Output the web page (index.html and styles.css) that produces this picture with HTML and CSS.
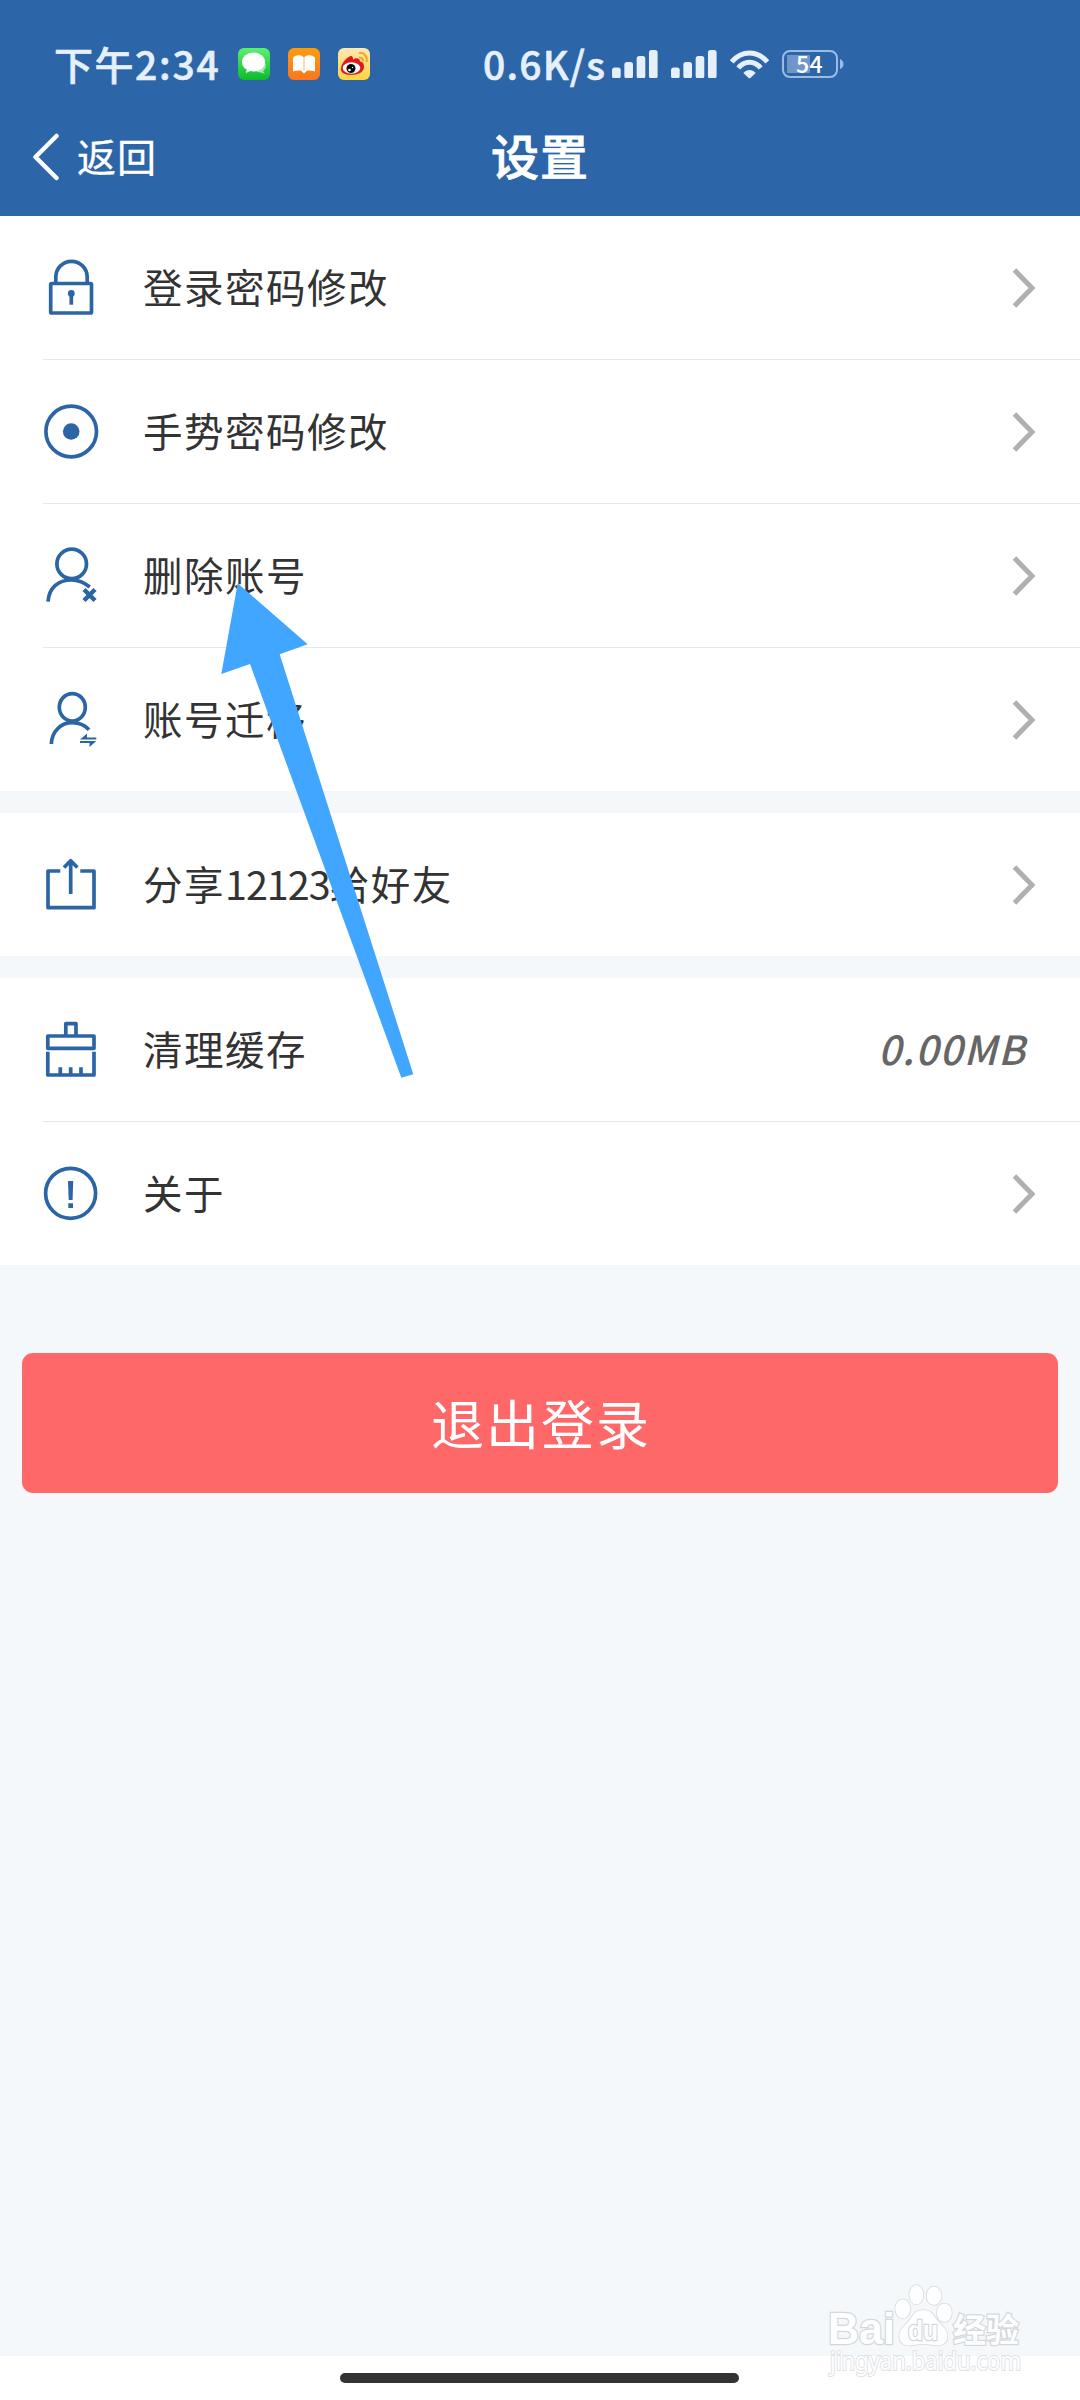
FILE: index.html
```html
<!DOCTYPE html>
<html lang="zh-CN">
<head>
<meta charset="utf-8">
<title>设置</title>
<link rel="stylesheet" href="styles.css">
</head>
<body>
<svg class="defs" width="0" height="0" aria-hidden="true">
  <symbol id="chevron" viewBox="0 0 24 42"><path d="M3.5 3 21 21 3.500 39" fill="none" stroke="#b0b0b0" stroke-width="5"/></symbol>
  <symbol id="signal" viewBox="0 0 138 86"><g fill="#e6f0fb"><rect y="53" width="26" height="33" rx="8"/><rect x="37" y="36" width="26" height="50" rx="8"/><rect x="74" y="18" width="26" height="68" rx="8"/><rect x="111" width="26" height="86" rx="8"/></g></symbol>
</svg>
<header class="header">
  <div class="status">
    <span class="time">下午<span class="clock">2:34</span></span>
    <div class="apps">
      <svg width="32" height="32" viewBox="0 0 32 32">
        <defs><linearGradient id="g1" x2="0" y2="1"><stop stop-color="#5cf070"/><stop offset="1" stop-color="#0bbb2b"/></linearGradient></defs>
        <rect width="32" height="32" rx="6" fill="url(#g1)"/>
        <path d="M18 22c4-1 7-4 8-9 3 4 2 8-1 10l2 3-4-1.500c-3 0-5-1-5-2.500z" fill="#a5e9ad"/>
        <ellipse cx="15.500" cy="14" rx="11.500" ry="9.500" fill="#fff"/><path d="M9 20 8 25l6-3z" fill="#fff"/>
      </svg>
      <svg width="32" height="32" viewBox="0 0 32 32">
        <defs><linearGradient id="g2" x2="0" y2="1"><stop stop-color="#fe9b0d"/><stop offset="1" stop-color="#fa7522"/></linearGradient></defs>
        <rect width="32" height="32" rx="6" fill="url(#g2)"/>
        <path d="M5 9.500C8 6.500 13 6.500 15.700 9v14.500C13 22 9 22 5 23.500zM16.300 9C19 6.500 24 6.500 27 9.500v14c-4-1.500-8-1.500-10.700 0z" fill="#fff"/><path d="M13 22.500h6l-3 3z" fill="#fff"/>
      </svg>
      <svg width="32" height="32" viewBox="0 0 32 32">
        <defs><linearGradient id="g3" x2="0" y2="1"><stop stop-color="#fdeab5"/><stop offset="1" stop-color="#fed43f"/></linearGradient></defs>
        <rect width="32" height="32" rx="6" fill="url(#g3)"/>
        <path d="M3 20C4 14 9 9 13 8c2 0 2 2 2 3.500 3-2 7-1.500 7 2 3 .5 4 2 4 5.500 0 5-6 8-13 8S2 24 3 20z" fill="#e01a1c"/>
        <ellipse cx="13.500" cy="20" rx="8.800" ry="5.800" fill="#fff"/><circle cx="13" cy="20.500" r="4.500" fill="#0a0a0a"/><circle cx="11.500" cy="22" r="1.300" fill="#fff"/><circle cx="14.500" cy="19.500" r=".7" fill="#fff"/>
        <path d="M21 5c5-1 9 4 7.500 9M21 9.500c2.500-.5 4.500 1.500 3.800 4" fill="none" stroke="#f3a32c" stroke-width="2"/>
      </svg>
    </div>
    <span class="speed">0.6K/s</span>
    <svg class="sig" width="46" height="28.600"><use href="#signal"/></svg>
    <svg class="sig sig2" width="46" height="28.600"><use href="#signal"/></svg>
    <svg class="wifi" width="39" height="29" viewBox="0 0 117 87">
      <g fill="none" stroke="#e6f0fb" stroke-width="15"><path d="M5 36C35 0 82 0 112 36"/><path d="M25 54C43 31 74 31 92 54"/></g>
      <path d="M40 69C50 57 67 57 77 69L62 83Q58.500 86 55 83z" fill="#e6f0fb"/>
    </svg>
    <div class="battery"><span class="level">54</span></div>
    <svg class="nub" width="5" height="10" viewBox="0 0 5 10"><path d="M1 0Q4.500 1.500 4.500 5T1 10z" fill="#9dbce4"/></svg>
  </div>
  <div class="titlebar">
    <a class="back"><svg width="28" height="48" viewBox="0 0 28 48"><path d="M24.500 3 3.500 24 24.500 45" fill="none" stroke="#fff" stroke-width="4.500" stroke-linecap="round" stroke-linejoin="round"/></svg><span class="back-text">返回</span></a>
    <h1 class="title">设置</h1>
  </div>
</header>
<main class="content">
  <section class="group">
    <div class="row">
      <svg class="icon" viewBox="0 0 60 61"><rect x="9.700" y="26.500" width="40.800" height="29.500" rx="1"/><path d="M14.800 26V20a15.700 15.700 0 0 1 31.400 0v6"/><circle class="solid" cx="30.300" cy="36.500" r="3.400"/><path d="M30.300 37v10.700"/></svg>
      <span class="label">登录密码修改</span><svg class="chev"><use href="#chevron"/></svg>
    </div>
    <div class="row">
      <svg class="icon" viewBox="0 0 60 61"><circle cx="30.200" cy="30.500" r="25.300"/><circle class="solid" cx="30.200" cy="30.500" r="8.300"/></svg>
      <span class="label">手势密码修改</span><svg class="chev"><use href="#chevron"/></svg>
    </div>
    <div class="row">
      <svg class="icon" viewBox="0 0 60 61"><circle cx="30.700" cy="18.900" r="14.800"/><path d="M7 56.700C8 43 17 35 30.300 35C38 35 44 38 48.800 42"/><path class="cross" d="M43 44.500 54 55.500M54 44.500 43 55.500"/></svg>
      <span class="label">删除账号</span><svg class="chev"><use href="#chevron"/></svg>
    </div>
    <div class="row">
      <svg class="icon" viewBox="0 0 60 61"><ellipse cx="31.300" cy="18.300" rx="13" ry="13.700"/><path d="M10.300 55C11 42 20 33.700 31.300 33.700C38 33.700 44 36.500 48 40.700"/><path class="solid" d="M39 50.500 46 44.500V48.500H55.300V50.500zM55.300 52H39V54H48.500V58z"/></svg>
      <span class="label">账号迁移</span><svg class="chev"><use href="#chevron"/></svg>
    </div>
  </section>
  <section class="group">
    <div class="row">
      <svg class="icon" viewBox="0 0 60 61"><path d="M19.300 17H7V53.700H53V17H39.300M29.700 40V7M23 13.500 29.700 6.800 36.400 13.500" stroke-linejoin="round"/></svg>
      <span class="label">分享<span class="digits">12123</span>给好友</span><svg class="chev"><use href="#chevron"/></svg>
    </div>
  </section>
  <section class="group">
    <div class="row">
      <svg class="icon" viewBox="0 0 60 61"><path d="M24.800 16V4.700H35V16M6.800 17H53V29.300H6.800zM6.800 32.700V56H53V32.700M19.300 48.300V56M29.700 48.300V56M40 48.300V56" stroke-linejoin="round"/></svg>
      <span class="label">清理缓存</span><span class="value">0.00MB</span>
    </div>
    <div class="row">
      <svg class="icon" viewBox="0 0 60 61"><circle cx="29.600" cy="30.300" r="25"/><path class="solid" d="M27 18H32.200L31.600 37H27.700zM27.300 40.300H32V44.900H27.300z"/></svg>
      <span class="label">关于</span><svg class="chev"><use href="#chevron"/></svg>
    </div>
  </section>
  <button class="logout">退出登录</button>
</main>
<footer class="navbar"><div class="pill"></div></footer>
<svg class="pointer" width="194" height="496" viewBox="220 583 194 496"><path d="M237.700 583.300 307.700 644.300 279.700 654.300 413.300 1074.300 401.300 1077.700 250 664 221.300 674z" fill="#41a6ff"/></svg>
<svg class="watermark" width="220" height="110" viewBox="0 0 220 110">
  <g class="wm-shape">
    <text class="wm-bai" x="7" y="64" textLength="67" lengthAdjust="spacingAndGlyphs">Bai</text>
    <ellipse cx="81.700" cy="28.700" rx="7.500" ry="9.500"/><ellipse cx="95.300" cy="14.700" rx="7" ry="9.800"/><ellipse cx="113" cy="15.700" rx="7.500" ry="9.200"/><ellipse cx="123.300" cy="32.700" rx="7.500" ry="9.300"/>
    <path d="M102.300 30c7 0 10 4 13 9 4 6 11 9 11 17 0 7-5 10-11 9.500-5-.5-8-1.500-13-1.500s-8 1-13 1.500c-6 .5-11-3-11-9.500 0-8 7-11 11-17 3-5 6-9 13-9z"/>
    <text class="wm-du" x="87" y="60" textLength="30" lengthAdjust="spacingAndGlyphs">du</text>
    <text class="wm-cn" x="132" y="62" textLength="66">经验</text>
    <text class="wm-url" x="9" y="89.500" textLength="191" lengthAdjust="spacingAndGlyphs">jingyan.baidu.com</text>
  </g>
</svg>
</body>
</html>
```
FILE: styles.css
```css
* { box-sizing: border-box; }
body {
  margin: 0;
  width: 1080px;
  height: 2400px;
  position: relative;
  display: flex;
  flex-direction: column;
  overflow: hidden;
  background: #f4f8fa;
  color: #333;
  font-family: "Noto Sans CJK SC", sans-serif;
}
.defs { position: absolute; }
svg { display: block; flex: none; }

.header {
  height: 216px;
  flex: none;
  background: #2c65a8;
  color: #fff;
}
.status {
  height: 97px;
  padding: 31px 0 0 54px;
  display: flex;
  align-items: center;
  color: #e6f0fb;
  font-size: 39px;
  font-weight: 500;
  line-height: 66px;
  white-space: nowrap;
}
.time, .speed {
  padding-bottom: 3px;
  -webkit-text-stroke: 0.6px #e6f0fb;
}
.time { width: 184px; letter-spacing: 1.500px; }
.clock { letter-spacing: 1.800px; }
.apps { display: flex; gap: 18px; width: 245px; }
.speed { width: 129px; letter-spacing: 1.200px; }
.sig2 { margin-left: 13px; }
.wifi { margin-left: 13px; }
.battery {
  width: 56px;
  height: 28px;
  margin-left: 13px;
  border: 2.500px solid #9dbce4;
  border-radius: 8px;
  display: flex;
  align-items: center;
  justify-content: center;
  background: linear-gradient(#7096c9, #7096c9) 3px 3px / 23px 18px no-repeat;
}
.level { padding: 0 1px 3px 0; font-size: 23px; line-height: 24px; color: #fff; letter-spacing: 0.5px; }
.nub { margin-left: 1px; }

.titlebar {
  height: 119px;
  display: grid;
  grid-template-columns: 1fr auto 1fr;
  align-items: center;
  padding-left: 32px;
}
.back {
  display: flex;
  align-items: center;
  gap: 17px;
  font-size: 39px;
  line-height: 60px;
  letter-spacing: 1px;
}
.back-text { padding-bottom: 4px; -webkit-text-stroke: 0.3px #fff; }
.title {
  margin: 0 32px 0 0;
  padding-bottom: 5px;
  font-size: 48px;
  font-weight: 500;
  line-height: 70px;
  letter-spacing: 1px;
  -webkit-text-stroke: 0.8px #fff;
}

.content { flex: 1; }
.group { background: #fff; margin-bottom: 22px; }
.row {
  height: 143px;
  padding: 0 45px 0 41px;
  display: flex;
  align-items: center;
}
.row + .row {
  height: 144px;
  border-top: 1px solid transparent;
  background: linear-gradient(#e8e8e8, #e8e8e8) 43px 0 / 100% 1px no-repeat border-box;
}
.icon {
  width: 60px;
  height: 61px;
  fill: none;
  stroke: #2c65a5;
  stroke-width: 3.700px;
}
.icon .solid { fill: #2c65a5; stroke: none; }
.icon .cross { stroke-width: 4.500px; }
.label {
  margin-left: 42px;
  padding-bottom: 3px;
  flex: 1;
  font-size: 39.500px;
  line-height: 60px;
  letter-spacing: 1.500px;
}
.digits { letter-spacing: -1px; }
.chev { width: 24px; height: 42px; }
.value {
  margin-right: 9px;
  padding-bottom: 3px;
  font-size: 40px;
  font-style: italic;
  font-weight: 500;
  line-height: 60px;
  letter-spacing: 1.300px;
  color: #666;
}
.logout {
  display: block;
  width: 1036px;
  height: 140px;
  margin: 88px 22px 0;
  padding: 0 0 2px 2px;
  border: 0;
  border-radius: 11px;
  background: #ff6869;
  color: #fff;
  font: 400 53px/80px "Noto Sans CJK SC", sans-serif;
  letter-spacing: 2px;
}
.navbar {
  height: 44px;
  flex: none;
  background: #fff;
  display: flex;
  justify-content: center;
  align-items: flex-start;
  padding: 17px 1px 0 0;
}
.pill { width: 399px; height: 10px; border-radius: 5px; background: #333; }

.pointer { position: absolute; left: 220px; top: 583px; }
.watermark { position: absolute; left: 821px; top: 2280px; }
.wm-shape { fill: #fdfeff; stroke: #d5d8da; stroke-width: 1.500px; paint-order: stroke; }
.wm-bai { font: bold 44px "Liberation Sans", sans-serif; stroke-width: 2.500px; }
.wm-du { font: bold 27px "Liberation Sans", sans-serif; stroke-width: 2.500px; }
.wm-cn { font: bold 33px "Noto Sans CJK SC", sans-serif; stroke-width: 2.500px; }
.wm-url { font: 25px "Noto Sans", sans-serif; stroke-width: 2px; stroke: #dfe1e3; }
```
